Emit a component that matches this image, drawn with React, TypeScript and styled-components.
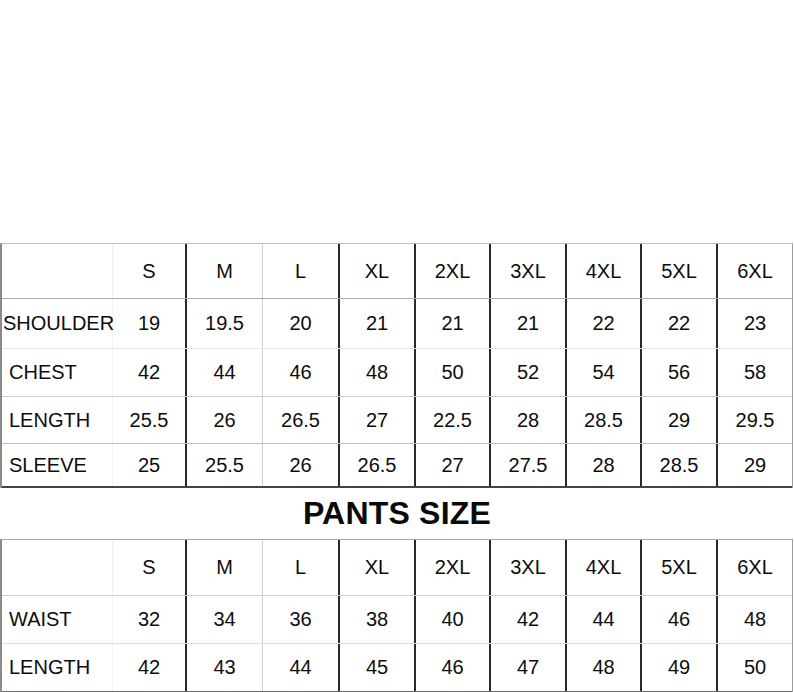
import React from 'react';
import styled, { createGlobalStyle } from 'styled-components';

const GlobalStyle = createGlobalStyle`
  html, body {
    margin: 0;
    padding: 0;
    background: #ffffff;
  }
  body {
    font-family: "Liberation Sans", Arial, sans-serif;
    color: #0d0d0d;
  }
`;

const Page = styled.div`
  width: 794px;
  padding-top: 243px;
  box-sizing: border-box;
`;

const Table = styled.div<{ $topColor: string }>`
  width: 793px;
  box-sizing: border-box;
  border-top: 1px solid ${p => p.$topColor};
  border-left: 2px solid #8a8a8a;
  border-right: 1px solid #9a9a9a;
`;

const Row = styled.div<{ $height: number; $line: string; $lineWidth?: number }>`
  display: grid;
  grid-template-columns: 111px 74px 76px 77px 76px 75px 76px 75px 76px 74px;
  height: ${p => p.$height}px;
  box-sizing: border-box;
  border-bottom: ${p => p.$lineWidth ?? 1}px solid ${p => p.$line};
`;

const Cell = styled.div<{ $sep: string; $sepWidth: number }>`
  display: flex;
  align-items: center;
  justify-content: center;
  font-size: 20px;
  white-space: nowrap;
  box-sizing: border-box;
  border-right: ${p => p.$sepWidth}px solid ${p => p.$sep};
`;

const LabelCell = styled(Cell)<{ $tight?: boolean }>`
  justify-content: flex-start;
  padding-left: ${p => (p.$tight ? 1 : 7)}px;
`;

const Title = styled.div`
  height: 51px;
  display: flex;
  align-items: center;
  justify-content: center;
  font-size: 32px;
  font-weight: 700;
  color: #0a0a0a;
  letter-spacing: 0.2px;
`;

const sizes = ['S', 'M', 'L', 'XL', '2XL', '3XL', '4XL', '5XL', '6XL'];

// separator after each size column: light between M and L, dark elsewhere
const seps: [string, number][] = [
  ['#2a2a2a', 2],
  ['#cfcfcf', 1],
  ['#2a2a2a', 2],
  ['#2a2a2a', 2],
  ['#2a2a2a', 2],
  ['#2a2a2a', 2],
  ['#2a2a2a', 2],
  ['#2a2a2a', 2],
  ['#ffffff', 0],
];

type ChartRow = {
  label: string;
  values: string[];
  height: number;
  line: string;
  lineWidth?: number;
  tight?: boolean;
};

const shirtRows: ChartRow[] = [
  { label: 'SHOULDER', values: ['19', '19.5', '20', '21', '21', '21', '22', '22', '23'], height: 50, line: '#e6e6e6', tight: true },
  { label: 'CHEST', values: ['42', '44', '46', '48', '50', '52', '54', '56', '58'], height: 48, line: '#cdcdcd' },
  { label: 'LENGTH', values: ['25.5', '26', '26.5', '27', '22.5', '28', '28.5', '29', '29.5'], height: 47, line: '#bdbdbd' },
  { label: 'SLEEVE', values: ['25', '25.5', '26', '26.5', '27', '27.5', '28', '28.5', '29'], height: 44, line: '#444444', lineWidth: 2 },
];

const pantsRows: ChartRow[] = [
  { label: 'WAIST', values: ['32', '34', '36', '38', '40', '42', '44', '46', '48'], height: 48, line: '#dddddd' },
  { label: 'LENGTH', values: ['42', '43', '44', '45', '46', '47', '48', '49', '50'], height: 48, line: '#6a6a6a', lineWidth: 1 },
];

const SizeChart: React.FC<{ rows: ChartRow[]; headerHeight: number; headerLine: string; topColor: string }> = ({
  rows,
  headerHeight,
  headerLine,
  topColor,
}) => (
  <Table $topColor={topColor}>
    <Row $height={headerHeight} $line={headerLine}>
      <LabelCell $sep="#efefef" $sepWidth={1} />
      {sizes.map((s, i) => (
        <Cell key={s} $sep={seps[i][0]} $sepWidth={seps[i][1]}>
          {s}
        </Cell>
      ))}
    </Row>
    {rows.map(row => (
      <Row key={row.label} $height={row.height} $line={row.line} $lineWidth={row.lineWidth}>
        <LabelCell $sep="#f3f3f3" $sepWidth={1} $tight={row.tight}>
          {row.label}
        </LabelCell>
        {row.values.map((v, i) => (
          <Cell key={i} $sep={seps[i][0]} $sepWidth={seps[i][1]}>
            {v}
          </Cell>
        ))}
      </Row>
    ))}
  </Table>
);

const App: React.FC = () => (
  <>
    <GlobalStyle />
    <Page>
      <SizeChart rows={shirtRows} headerHeight={55} headerLine="#ababab" topColor="#bdbdbd" />
      <Title>PANTS SIZE</Title>
      <SizeChart rows={pantsRows} headerHeight={56} headerLine="#d0d0d0" topColor="#a8a8a8" />
    </Page>
  </>
);

export default App;
